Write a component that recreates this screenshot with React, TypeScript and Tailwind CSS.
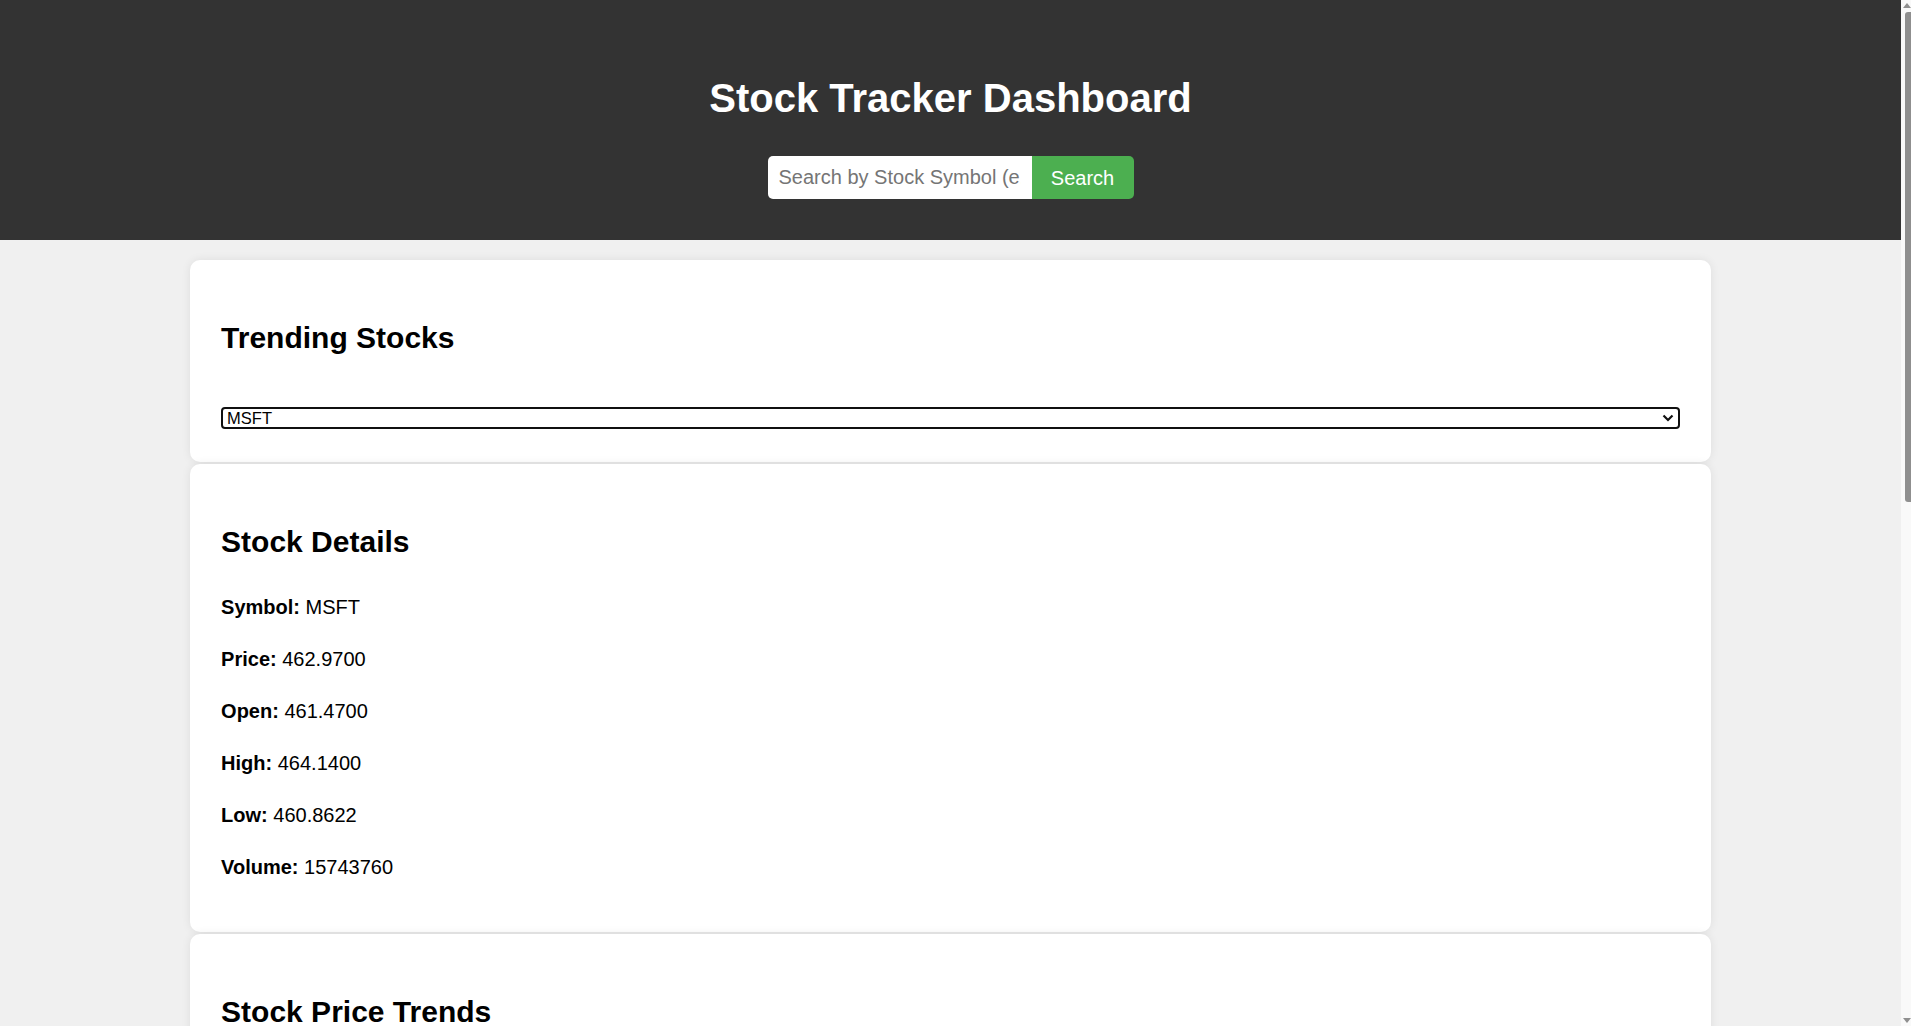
import { FC } from 'react';

const details = [
  { label: 'Symbol:', value: 'MSFT' },
  { label: 'Price:', value: '462.9700' },
  { label: 'Open:', value: '461.4700' },
  { label: 'High:', value: '464.1400' },
  { label: 'Low:', value: '460.8622' },
  { label: 'Volume:', value: '15743760' },
];

const closes = [455.2, 456.8, 455.9, 458.1, 459.4, 458.7, 460.2, 461.5, 460.9, 462.3, 461.8, 463.1, 462.97];
const points = closes.map((c, i) => `${i * 115},${(466 - c) * 40}`).join(' ');

const App: FC = () => {
  return (
    <div className="flex h-[1026px] overflow-hidden bg-[#f0f0f0] font-['Liberation_Sans',Arial,sans-serif] text-black">
      <div className="min-w-0 flex-1">
        <header className="flex flex-col items-center bg-[#333333] pt-[75px] pb-[41px]">
          <h1 className="text-[40px] leading-[46px] font-bold text-white">Stock Tracker Dashboard</h1>
          <div className="mt-[35px] flex h-[43px]">
            <input
              className="h-full w-[264px] rounded-l-[5px] bg-white px-[11px] text-[20px] outline-none placeholder:text-[#757575]"
              type="text"
              placeholder="Search by Stock Symbol (e.g. AAPL)"
            />
            <button className="h-full w-[102px] rounded-r-[5px] bg-[#4caf50] text-[20px] text-white">
              Search
            </button>
          </div>
        </header>

        <main className="mt-[20px] flex flex-col items-center gap-[2px]">
          <section className="w-[80%] rounded-[10px] bg-white px-[31px] pt-[61px] pb-[33px] shadow-[0_0_10px_rgba(0,0,0,0.08)]">
            <h2 className="text-[30px] leading-[34px] font-bold">Trending Stocks</h2>
            <div className="relative mt-[52px]">
              <select className="block h-[22px] w-full appearance-none rounded-[4px] border-2 border-[#101010] bg-white pl-[4px] text-[16.5px] leading-[18px] outline-none">
                <option>MSFT</option>
                <option>AAPL</option>
                <option>GOOGL</option>
                <option>AMZN</option>
                <option>TSLA</option>
              </select>
              <svg
                className="pointer-events-none absolute top-[6px] right-[6px] h-[10px] w-[12px]"
                viewBox="0 0 12 10"
                fill="none"
                stroke="#111"
                strokeWidth="2.2"
              >
                <path d="M1.5 2.5 L6 7 L10.5 2.5" />
              </svg>
            </div>
          </section>

          <section className="w-[80%] rounded-[10px] bg-white px-[31px] pt-[61px] pb-[53px] shadow-[0_0_10px_rgba(0,0,0,0.08)]">
            <h2 className="text-[30px] leading-[34px] font-bold">Stock Details</h2>
            <div className="mt-[37px] flex flex-col gap-[29px]">
              {details.map((d) => (
                <p key={d.label} className="text-[20px] leading-[23px]">
                  <strong>{d.label}</strong> {d.value}
                </p>
              ))}
            </div>
          </section>

          <section className="w-[80%] rounded-[10px] bg-white px-[31px] pt-[61px] pb-[31px] shadow-[0_0_10px_rgba(0,0,0,0.08)]">
            <h2 className="text-[30px] leading-[34px] font-bold">Stock Price Trends</h2>
            <svg className="mt-[25px] h-[500px] w-full" viewBox="0 0 1400 500" preserveAspectRatio="none">
              <polyline points={points} fill="none" stroke="#4caf50" strokeWidth="3" />
            </svg>
          </section>
        </main>
      </div>

      {/* browser scrollbar */}
      <div className="flex h-[1026px] w-[10px] shrink-0 flex-col items-end bg-[#f9f9f9]">
        <svg className="mt-[3px] h-[5px] w-[8px]" viewBox="0 0 8 5">
          <path d="M0 5 L4 0 L8 5 Z" fill="#8f8f8f" />
        </svg>
        <div className="mt-[4px] h-[490px] w-[6px] rounded-l-[3px] bg-[#8f8f8f]" />
        <div className="flex-1" />
        <svg className="mb-[3px] h-[5px] w-[8px]" viewBox="0 0 8 5">
          <path d="M0 0 L8 0 L4 5 Z" fill="#8f8f8f" />
        </svg>
      </div>
    </div>
  );
};

export default App;
